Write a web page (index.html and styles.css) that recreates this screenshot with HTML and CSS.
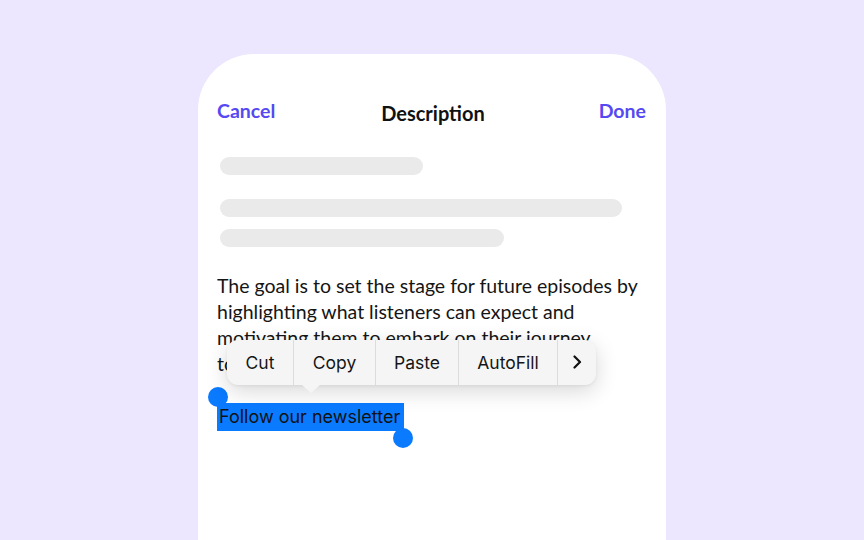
FILE: index.html
```html
<!DOCTYPE html>
<html>
<head>
<meta charset="utf-8">
<link rel="stylesheet" href="styles.css">
</head>
<body>
<div class="card">
  <div class="nav">
    <span class="nav-btn">Cancel</span>
    <span class="nav-title">Description</span>
    <span class="nav-btn">Done</span>
  </div>
  <div class="skeleton">
    <div class="bar bar1"></div>
    <div class="bar-group">
      <div class="bar bar2"></div>
      <div class="bar bar3"></div>
    </div>
  </div>
  <p class="body-text">The goal is to set the stage for future episodes by highlighting what listeners can expect and motivating them to embark on their journey together.</p>
  <div class="selection-line">
    <span class="selected">Follow our newsletter<span class="handle handle-start"></span><span class="handle handle-end"></span></span>
  </div>
  <div class="menu">
    <span class="menu-item">Cut</span>
    <span class="menu-item">Copy</span>
    <span class="menu-item">Paste</span>
    <span class="menu-item">AutoFill</span>
    <span class="menu-item menu-more"><svg width="10" height="14" viewBox="0 0 10 14"><path d="M2.5 1.5 L8 7 L2.5 12.5" fill="none" stroke="#111" stroke-width="2.2" stroke-linecap="round" stroke-linejoin="round"/></svg></span>
    <span class="menu-arrow"></span>
  </div>
</div>
</body>
</html>
```
FILE: styles.css
```css
* { box-sizing: border-box; }
html, body { margin: 0; padding: 0; }
body {
  width: 864px;
  height: 540px;
  overflow: hidden;
  background: #ece6fe;
  display: flex;
  justify-content: center;
  font-family: "Lato", "Noto Sans", sans-serif;
}
.card {
  position: relative;
  margin-top: 54px;
  width: 468px;
  height: 486px;
  background: #fff;
  border-radius: 56px 56px 0 0;
  padding: 0 20px 0 19px;
}
.nav {
  display: flex;
  justify-content: space-between;
  align-items: center;
  padding-top: 44px;
  height: 69px;
}
.nav-btn {
  color: #5549f2;
  font-weight: 700;
  font-size: 19.5px;
}
.nav-title {
  color: #111;
  font-weight: 700;
  font-size: 20px;
  position: relative;
  top: 2px;
  left: -4px;
}
.skeleton {
  padding: 34px 0 0 3px;
  display: flex;
  flex-direction: column;
  gap: 24px;
}
.bar {
  height: 18px;
  border-radius: 9px;
  background: #eaeaeb;
}
.bar1 { width: 203px; }
.bar2 { width: 402px; }
.bar3 { width: 284px; }
.bar-group { display: flex; flex-direction: column; gap: 12px; }
.body-text {
  margin: 26px 0 0;
  font-size: 19.5px;
  line-height: 26px;
  color: #151515;
  height: 104px;
  overflow: hidden;
}
.selection-line {
  margin-top: 26px;
  font-family: "Inter", sans-serif;
  font-size: 18px;
  line-height: 28px;
}
.selected {
  position: relative;
  display: inline-block;
  background: #0a7aff;
  color: #111;
  padding: 0 4px 0 2px;
}
.handle {
  position: absolute;
  width: 20px;
  height: 20px;
  border-radius: 50%;
  background: #0a7aff;
}
.handle-start { left: -9px; top: -16px; }
.handle-end { right: -9px; bottom: -17px; }
.menu {
  position: absolute;
  left: 29px;
  top: 286px;
  height: 45px;
  display: flex;
  background: #f5f5f5;
  border-radius: 11px;
  box-shadow: 0 6px 22px rgba(0,0,0,0.16), 0 1px 3px rgba(0,0,0,0.06);
  font-family: "Inter", sans-serif;
  font-size: 17.5px;
  color: #151515;
}
.menu-item {
  display: flex;
  align-items: center;
  justify-content: center;
  height: 100%;
  padding-bottom: 1px;
  border-left: 1px solid #dcdcdc;
}
.menu-item:first-child { border-left: none; width: 66px; }
.menu-item:nth-child(2) { width: 82px; }
.menu-item:nth-child(3) { width: 83px; }
.menu-item:nth-child(4) { width: 99px; }
.menu-more { width: 39px; }
.menu-arrow {
  position: absolute;
  left: 74px;
  top: 44px;
  width: 0;
  height: 0;
  border-left: 10px solid transparent;
  border-right: 10px solid transparent;
  border-top: 9px solid #f5f5f5;
}
```
